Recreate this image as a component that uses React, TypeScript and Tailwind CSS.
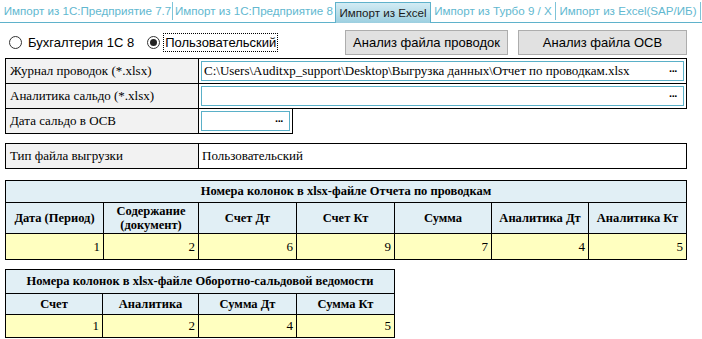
import React from "react";

const tabs: [string, string][] = [
  ["Импорт из 1С:Предприятие 7.7", "w-[170px] border-r"],
  ["Импорт из 1С:Предприятие 8", "w-[162px]"],
  ["Импорт из Excel", "w-[96px]"],
  ["Импорт из Турбо 9 / X", "w-[125px] border-r"],
  ["Импорт из Excel(SAP/ИБ)", "w-[145px] border-r"],
];

function Dots() {
  return <span className="text-[11px] font-bold leading-none tracking-[-1px] text-black" style={{ fontFamily: "Liberation Sans, sans-serif" }}>···</span>;
}

export default function App() {
  const serif = { fontFamily: '"Liberation Serif", serif' };
  const sans = { fontFamily: '"Liberation Sans", Arial, sans-serif' };
  return (
    <div className="w-[702px] h-[339px] bg-white overflow-hidden" style={sans}>
      {/* Tabs */}
      <div className="flex items-end h-[23px] border-b border-[#5fb2cb] pl-[3px] whitespace-nowrap">
        {tabs.map(([t, w], i) =>
          i === 2 ? (
            <div key={t} className={`${w} shrink-0 h-[21px] -mb-px flex items-center justify-center text-[11.6px] text-[#1a1a1a] border border-b-0 border-[#5fb2cb] bg-gradient-to-b from-[#d3ecf4] to-[#9ccfe0]`}>
              {t}
            </div>
          ) : (
            <div key={t} className={`${w} shrink-0 h-[18px] mb-[2px] flex items-center justify-center text-[11.6px] text-[#62b8d0] border-[#7ec4d8]`}>
              {t}
            </div>
          )
        )}
      </div>

      {/* Radios & buttons */}
      <div className="flex items-center h-[35px] pt-[4px] pl-[9px] whitespace-nowrap">
        <label className="shrink-0 flex items-center text-[13px] text-black">
          <span className="w-[13px] h-[13px] rounded-full border border-[#333] bg-white mr-[6px]" />
          Бухгалтерия 1С 8
        </label>
        <label className="shrink-0 flex items-center text-[13px] text-black ml-[13px]">
          <span className="w-[13px] h-[13px] rounded-full border border-[#333] bg-white mr-[3px] flex items-center justify-center">
            <span className="w-[7px] h-[7px] rounded-full bg-[#222]" />
          </span>
          <span className="border border-dotted border-black px-px leading-[17px]">Пользовательский</span>
        </label>
        <div className="flex-1" />
        <button className="shrink-0 w-[163px] h-[25px] bg-[#e1e1e1] border border-[#adadad] text-[13px] text-black">
          Анализ файла проводок
        </button>
        <button className="shrink-0 ml-[10px] mr-[15px] w-[169px] h-[25px] bg-[#e1e1e1] border border-[#adadad] text-[13px] text-black">
          Анализ файла ОСВ
        </button>
      </div>

      <div className="pl-[5px]" style={serif}>
        {/* Form */}
        <table className="border-collapse text-[13px] text-black">
          <tbody>
            <tr className="h-[25px]">
              <td className="border border-black bg-[#f2f2f2] w-[193px] px-[4px]">Журнал проводок (*.xlsx)</td>
              <td className="border border-black w-[488px] p-[2px]">
                <div className="h-[20px] border border-[#5ab0c8] flex items-center justify-between pl-[2px] pr-[6px]">
                  <span>C:\Users\Auditxp_support\Desktop\Выгрузка данных\Отчет по проводкам.xlsx</span>
                  <Dots />
                </div>
              </td>
            </tr>
            <tr className="h-[25px]">
              <td className="border border-black bg-[#f2f2f2] px-[4px]">Аналитика сальдо (*.xlsx)</td>
              <td className="border border-black p-[2px]">
                <div className="h-[20px] border border-[#5ab0c8] flex items-center justify-end pr-[6px]">
                  <Dots />
                </div>
              </td>
            </tr>
          </tbody>
        </table>
        <table className="border-collapse text-[13px] text-black -mt-px">
          <tbody>
            <tr className="h-[25px]">
              <td className="border border-black bg-[#f2f2f2] w-[193px] px-[4px]">Дата сальдо в ОСВ</td>
              <td className="border border-black w-[94px] p-[2px]">
                <div className="h-[20px] border border-[#5ab0c8] flex items-center justify-end pr-[6px]">
                  <Dots />
                </div>
              </td>
            </tr>
          </tbody>
        </table>

        <table className="border-collapse text-[13px] text-black mt-[9px]">
          <tbody>
            <tr className="h-[25px]">
              <td className="border border-black bg-[#f2f2f2] w-[193px] px-[4px]">Тип файла выгрузки</td>
              <td className="border border-black w-[488px] px-[3px]">Пользовательский</td>
            </tr>
          </tbody>
        </table>

        {/* Table 1 */}
        <table className="border-collapse text-black mt-[11px] w-[682px] table-fixed">
          <colgroup>
            <col className="w-[98px]" />
            <col className="w-[95px]" />
            <col className="w-[98px]" />
            <col className="w-[98px]" />
            <col className="w-[97px]" />
            <col className="w-[97px]" />
            <col className="w-[98px]" />
          </colgroup>
          <tbody>
            <tr className="h-[22px]">
              <td colSpan={7} className="border border-black bg-[#e1eff5] text-center font-bold text-[12.5px]">
                Номера колонок в xlsx-файле Отчета по проводкам
              </td>
            </tr>
            <tr className="h-[31px]">
              {["Дата (Период)", "Содержание (документ)", "Счет Дт", "Счет Кт", "Сумма", "Аналитика Дт", "Аналитика Кт"].map((h) => (
                <td key={h} className="border border-black bg-[#e1eff5] text-center font-bold text-[12.5px] leading-[14px] px-[2px]">
                  {h === "Содержание (документ)" ? (<>Содержание<br />(документ)</>) : h}
                </td>
              ))}
            </tr>
            <tr className="h-[26px]">
              {[1, 2, 6, 9, 7, 4, 5].map((n, i) => (
                <td key={i} className="border border-black bg-[#ffffc0] text-right text-[13px] px-[3px]">{n}</td>
              ))}
            </tr>
          </tbody>
        </table>

        {/* Table 2 */}
        <table className="border-collapse text-black mt-[9px] w-[389px] table-fixed">
          <colgroup>
            <col className="w-[97px]" />
            <col className="w-[96px]" />
            <col className="w-[98px]" />
            <col className="w-[98px]" />
          </colgroup>
          <tbody>
            <tr className="h-[24px]">
              <td colSpan={4} className="border border-black bg-[#e1eff5] text-center font-bold text-[12.5px]">
                Номера колонок в xlsx-файле Оборотно-сальдовой ведомости
              </td>
            </tr>
            <tr className="h-[21px]">
              {["Счет", "Аналитика", "Сумма Дт", "Сумма Кт"].map((h) => (
                <td key={h} className="border border-black bg-[#e1eff5] text-center font-bold text-[12.5px]">{h}</td>
              ))}
            </tr>
            <tr className="h-[23px]">
              {[1, 2, 4, 5].map((n, i) => (
                <td key={i} className="border border-black bg-[#ffffc0] text-right text-[13px] px-[3px]">{n}</td>
              ))}
            </tr>
          </tbody>
        </table>
      </div>
    </div>
  );
}
